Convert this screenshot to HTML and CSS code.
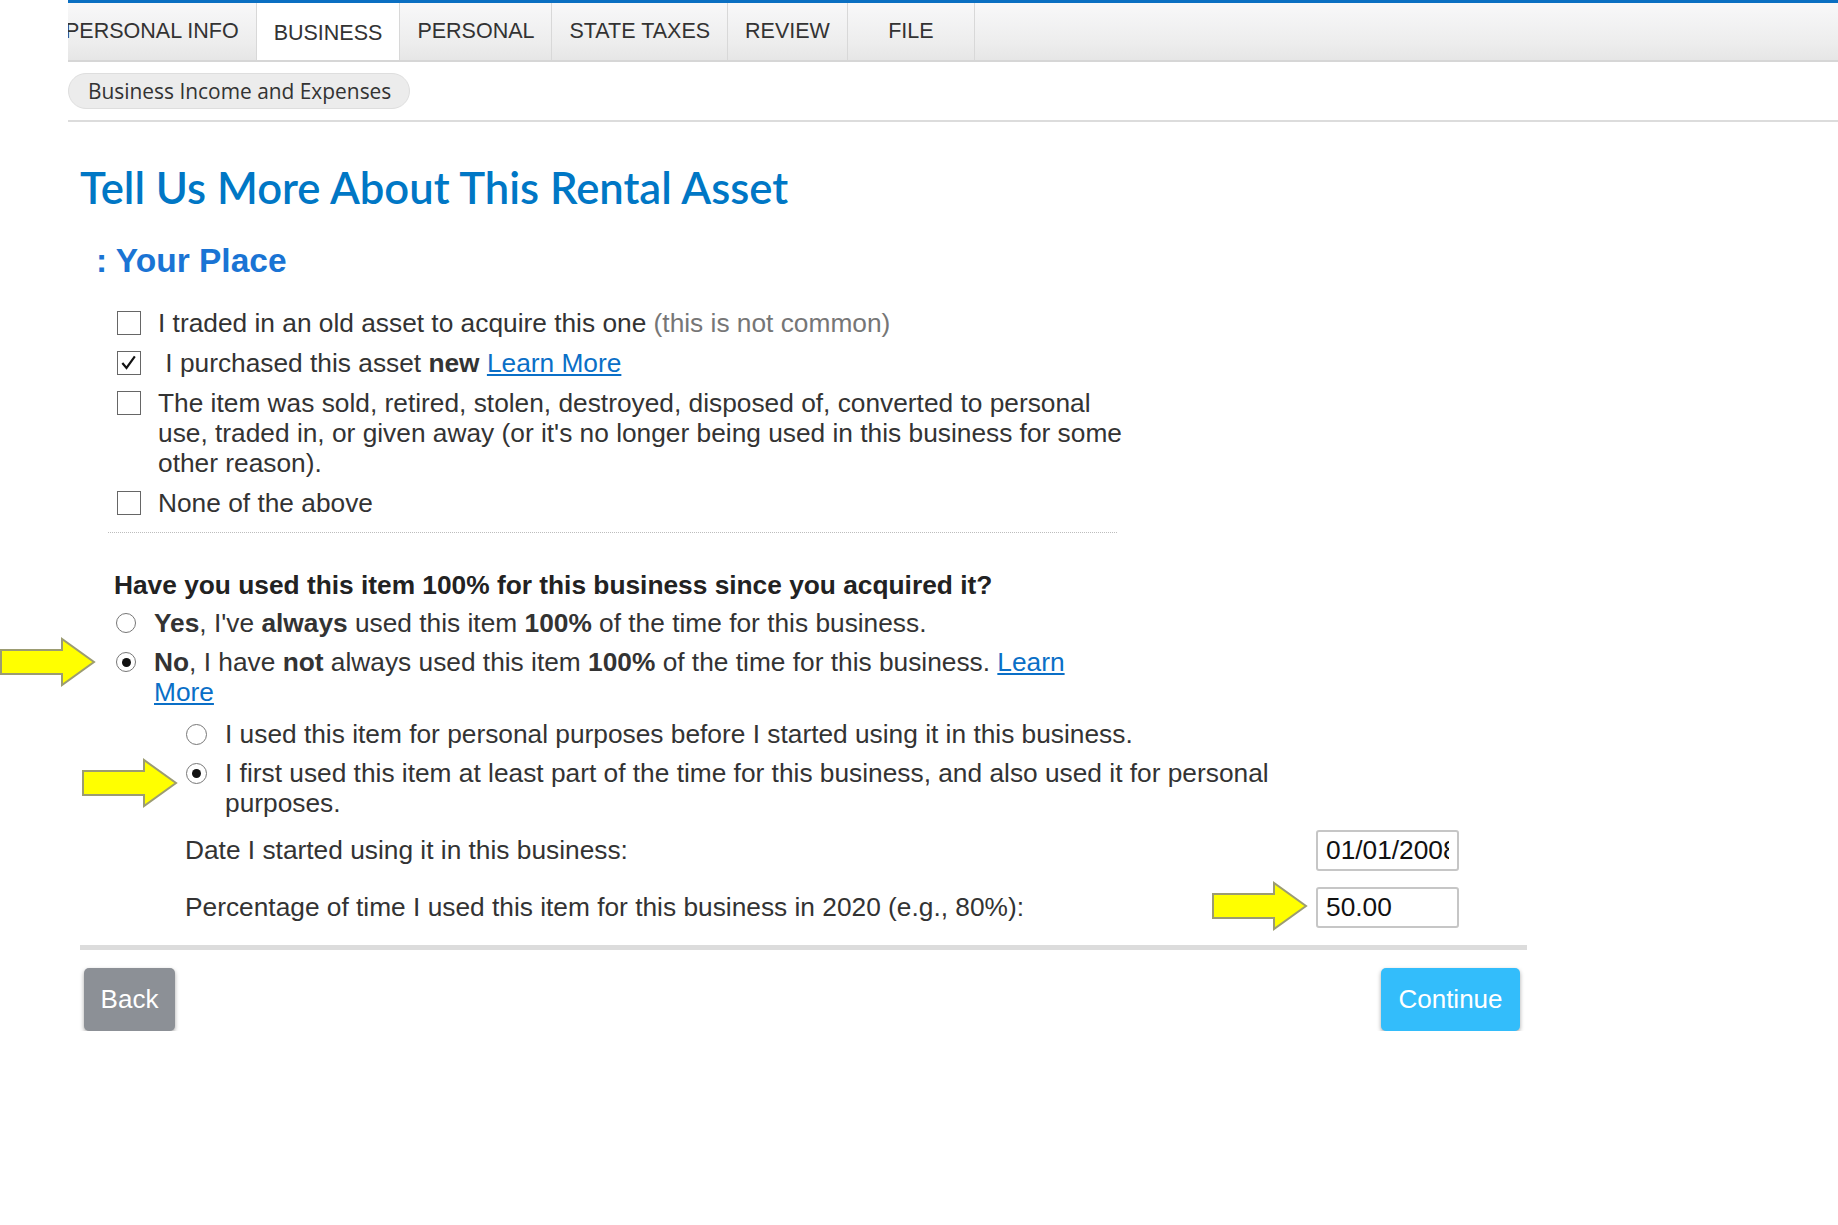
FILE: index.html
```html
<!DOCTYPE html>
<html lang="en">
<head>
  <meta charset="UTF-8">
  <meta name="viewport" content="width=device-width, initial-scale=1.0">
  <title>Tell Us More About This Rental Asset</title>
  <link rel="stylesheet" href="styles.css">
</head>
<body>
  <div class="page">
    <nav class="tabs">
      <div class="tab tab-first">PERSONAL INFO</div>
      <div class="tab active">BUSINESS</div>
      <div class="tab">PERSONAL</div>
      <div class="tab">STATE TAXES</div>
      <div class="tab">REVIEW</div>
      <div class="tab tab-file">FILE</div>
    </nav>

    <div class="subnav">
      <span class="pill">Business Income and Expenses</span>
    </div>

    <div class="content">
      <h1 class="title">Tell Us More About This Rental Asset</h1>
      <h2 class="place">: Your Place</h2>

      <div class="checklist">
        <div class="check-row">
          <span class="box"></span>
          <span class="label">I traded in an old asset to acquire this one <span class="muted">(this is not common)</span></span>
        </div>
        <div class="check-row">
          <span class="box checked">
            <svg viewBox="0 0 24 24" width="20" height="20"><polyline points="4,12 9,18 19,4" fill="none" stroke="#111" stroke-width="2.6"/></svg>
          </span>
          <span class="label">&nbsp;I purchased this asset <b>new</b> <a href="#">Learn More</a></span>
        </div>
        <div class="check-row">
          <span class="box"></span>
          <span class="label">The item was sold, retired, stolen, destroyed, disposed of, converted to personal use, traded in, or given away (or it's no longer being used in this business for some other reason).</span>
        </div>
        <div class="check-row">
          <span class="box"></span>
          <span class="label">None of the above</span>
        </div>
      </div>

      <div class="dotted"></div>

      <p class="question">Have you used this item 100% for this business since you acquired it?</p>

      <div class="radios">
        <div class="radio-row">
          <span class="radio"></span>
          <span class="label"><b>Yes</b>, I've <b>always</b> used this item <b>100%</b> of the time for this business.</span>
        </div>
        <div class="radio-row">
          <svg class="arrow arrow-no" viewBox="0 0 96 50" width="96" height="50"><polygon points="1,13 62,13 62,2 94,25 62,48 62,37 1,37" fill="#ffff00" stroke="#9c9c72" stroke-width="2"/></svg>
          <span class="radio on"></span>
          <span class="label"><b>No</b>, I have <b>not</b> always used this item <b>100%</b> of the time for this business. <a href="#">Learn More</a></span>
        </div>
      </div>

      <div class="subradios">
        <div class="radio-row">
          <span class="radio"></span>
          <span class="label">I used this item for personal purposes before I started using it in this business.</span>
        </div>
        <div class="radio-row">
          <svg class="arrow arrow-sub" viewBox="0 0 96 50" width="96" height="50"><polygon points="1,13 62,13 62,2 94,25 62,48 62,37 1,37" fill="#ffff00" stroke="#9c9c72" stroke-width="2"/></svg>
          <span class="radio on"></span>
          <span class="label">I first used this item at least part of the time for this business, and also used it for personal purposes.</span>
        </div>
      </div>

      <div class="fields">
        <div class="field-row">
          <span class="field-label">Date I started using it in this business:</span>
          <input class="field-input" type="text" value="01/01/2008">
        </div>
        <div class="field-row">
          <span class="field-label">Percentage of time I used this item for this business in 2020 (e.g., 80%):</span>
          <div class="input-wrap">
            <svg class="arrow arrow-pct" viewBox="0 0 96 50" width="96" height="50"><polygon points="1,13 62,13 62,2 94,25 62,48 62,37 1,37" fill="#ffff00" stroke="#9c9c72" stroke-width="2"/></svg>
            <input class="field-input" type="text" value="50.00">
          </div>
        </div>
      </div>

      <div class="rule"></div>

      <div class="actions">
        <button class="btn btn-back">Back</button>
        <button class="btn btn-continue">Continue</button>
      </div>
    </div>
  </div>
</body>
</html>
```

FILE: styles.css
```css
body {
  margin: 0;
  background: #fff;
  font-family: "Liberation Sans", Arial, sans-serif;
  color: #333;
}

.page {
  margin-left: 68px;
}

/* top tab bar */
.tabs {
  display: flex;
  height: 57px;
  overflow: hidden;
  border-top: 3px solid #0a6fc2;
  border-bottom: 2px solid #d6d6d6;
  background: linear-gradient(#f8f8f9, #ededed 70%, #e6e6e6);
}

.tab {
  padding: 0 17px;
  line-height: 56px;
  font-size: 21.5px;
  color: #333;
  border-right: 1px solid #d8d8d8;
  white-space: nowrap;
}

.tab-first {
  margin-left: -20px;
}

.tab.active {
  background: #fff;
  line-height: 60px;
  height: 59px;
}

.tab-file {
  width: 126px;
  padding: 0;
  text-align: center;
}

.subnav {
  padding: 11px 0 11px;
  border-bottom: 2px solid #dcdcdc;
}

.pill {
  display: inline-block;
  height: 34px;
  line-height: 34px;
  padding: 0 18px 0 19px;
  border: 1px solid #dedede;
  border-radius: 20px;
  background: #ececec;
  font-family: "Open Sans", "Liberation Sans", sans-serif;
  font-size: 20.9px;
  color: #333;
}

.content {
  padding-left: 12px;
}

.title {
  margin: 40px 0 0;
  font-family: Lato, "Open Sans", sans-serif;
  font-weight: 600;
  font-size: 43.6px;
  line-height: 50px;
  color: #0077c5;
}

.place {
  margin: 30px 0 0 16px;
  font-size: 33.5px;
  line-height: 38px;
  font-weight: 700;
  color: #1a74d4;
}

.checklist {
  margin: 28px 0 0 37px;
  width: 1005px;
  display: flex;
  flex-direction: column;
  gap: 10px;
}

.check-row,
.radio-row {
  display: flex;
  align-items: flex-start;
  font-size: 26.3px;
  line-height: 30px;
  position: relative;
}

.box {
  flex: none;
  width: 22px;
  height: 22px;
  margin-top: 3px;
  margin-right: 17px;
  border: 1.5px solid #666;
  display: flex;
  align-items: center;
  justify-content: center;
  background: #fff;
}

.muted {
  color: #767676;
}

a {
  color: #0a6fc7;
  text-decoration: underline;
}

.dotted {
  margin: 14px 0 0 28px;
  width: 1009px;
  border-top: 1px dotted #bdbdbd;
}

.question {
  margin: 37px 0 0 34px;
  font-size: 26.3px;
  line-height: 30px;
  font-weight: 700;
  color: #222;
}

.radios {
  margin: 8px 0 0 36px;
  width: 1004px;
  display: flex;
  flex-direction: column;
  gap: 9px;
}

.radio {
  flex: none;
  width: 18px;
  height: 18px;
  margin-top: 5px;
  margin-right: 18px;
  border: 1.5px solid #777;
  border-radius: 50%;
  background: #fff;
  display: flex;
  align-items: center;
  justify-content: center;
}

.radio.on::after {
  content: "";
  width: 9px;
  height: 9px;
  border-radius: 50%;
  background: #111;
}

.subradios {
  margin: 12px 0 0 106px;
  width: 1110px;
  display: flex;
  flex-direction: column;
  gap: 9px;
}

.subradios .radio {
  width: 19px;
  height: 19px;
  margin-right: 18px;
}

/* yellow call-out arrows drawn over the form */
.arrow {
  position: absolute;
}

.arrow-no {
  left: -116px;
  top: -10px;
}

.arrow-sub {
  left: -104px;
  top: 0;
}

.fields {
  margin: 12px 0 0 105px;
  width: 1274px;
  display: flex;
  flex-direction: column;
  gap: 16px;
}

.field-row {
  display: flex;
  justify-content: space-between;
  align-items: center;
}

.field-label {
  font-size: 26.3px;
  color: #333;
}

.input-wrap {
  position: relative;
}

.arrow-pct {
  left: -104px;
  top: -6px;
}

.field-input {
  box-sizing: border-box;
  width: 143px;
  height: 41px;
  padding: 0 8px;
  border: 2px solid #c6c6c6;
  border-radius: 3px;
  font-family: "Liberation Sans", Arial, sans-serif;
  font-size: 26.3px;
  color: #111;
  background: #fff;
}

.rule {
  margin-top: 17px;
  width: 1447px;
  height: 5px;
  background: #dcdcdc;
}

.actions {
  margin: 18px 7px 0 4px;
  width: 1436px;
  display: flex;
  justify-content: space-between;
}

.btn {
  height: 63px;
  padding: 0 10px;
  border: none;
  border-radius: 5px;
  font-family: "Liberation Sans", Arial, sans-serif;
  font-size: 26px;
  color: #fff;
  box-shadow: 0 2px 4px rgba(0, 0, 0, 0.35);
  cursor: pointer;
}

.btn-back {
  width: 91px;
  background: #8c9096;
}

.btn-continue {
  width: 139px;
  background: #33bdfb;
}
```
